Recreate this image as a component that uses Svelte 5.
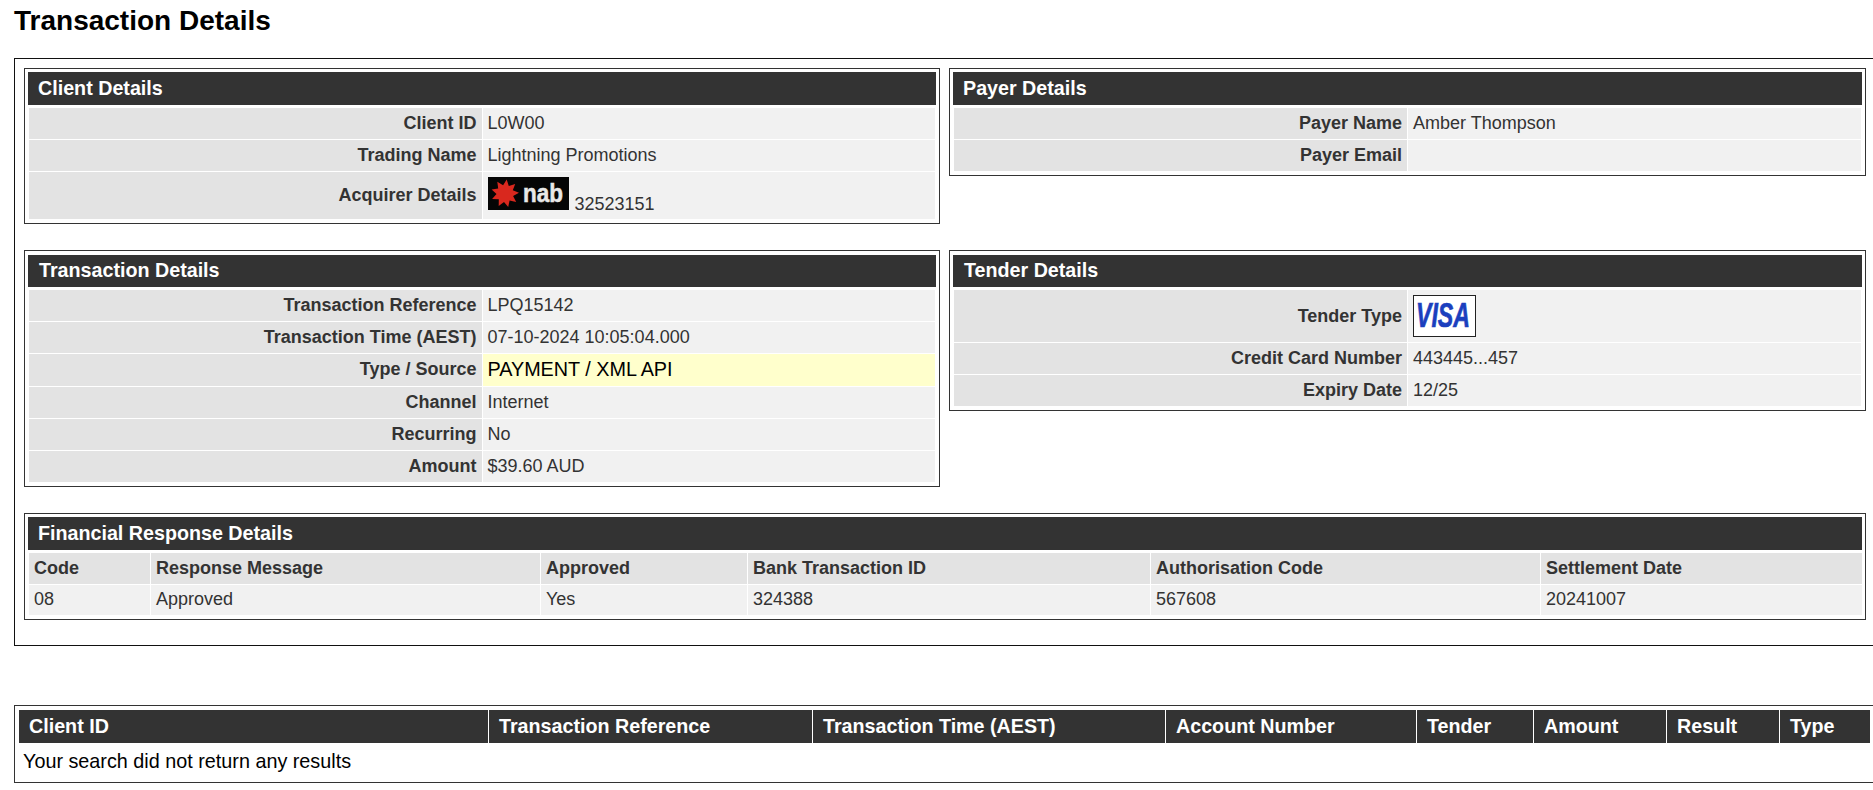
<script>
    const clientRows = [
        ['Client ID', 'L0W00'],
        ['Trading Name', 'Lightning Promotions']
    ];
    const payerRows = [
        ['Payer Name', 'Amber Thompson'],
        ['Payer Email', '']
    ];
    const transactionRows = [
        ['Transaction Reference', 'LPQ15142'],
        ['Transaction Time (AEST)', '07-10-2024 10:05:04.000'],
        ['Type / Source', 'PAYMENT / XML API', true],
        ['Channel', 'Internet'],
        ['Recurring', 'No'],
        ['Amount', '$39.60 AUD']
    ];
    const tenderRows = [
        ['Credit Card Number', '443445...457'],
        ['Expiry Date', '12/25']
    ];
    const financial = [
        ['Code', '08', 121],
        ['Response Message', 'Approved', 389],
        ['Approved', 'Yes', 206],
        ['Bank Transaction ID', '324388', 402],
        ['Authorisation Code', '567608', 389],
        ['Settlement Date', '20241007', 321]
    ];
    const searchCols = [
        ['Client ID', 470],
        ['Transaction Reference', 324],
        ['Transaction Time (AEST)', 353],
        ['Account Number', 251],
        ['Tender', 117],
        ['Amount', 133],
        ['Result', 113],
        ['Type', 91]
    ];

    // spiky star of the nab logo
    function starPoints(cx, cy, outer, inner, count) {
        const pts = [];
        for (let i = 0; i < count * 2; i++) {
            const r = i % 2 ? inner : outer;
            const a = (Math.PI * i) / count - Math.PI / 2 + 0.12;
            pts.push((cx + r * Math.cos(a)).toFixed(1) + ',' + (cy + r * Math.sin(a)).toFixed(1));
        }
        return pts.join(' ');
    }
</script>

<h1>Transaction Details</h1>

<section class="outer">
    <div class="grid">
        <div class="box">
            <h2>Client Details</h2>
            <table>
                <tbody>
                    {#each clientRows as [label, value]}
                        <tr><th>{label}</th><td>{value}</td></tr>
                    {/each}
                    <tr class="logo-row">
                        <th>Acquirer Details</th>
                        <td>
                            <svg class="nab" width="81" height="33" viewBox="0 0 81 33">
                                <rect width="81" height="33" fill="#050505" />
                                <polygon points={starPoints(17, 16.5, 14, 8.5, 9)} fill="#d9281e" />
                                <text x="35" y="25" class="nab-text" textLength="40" lengthAdjust="spacingAndGlyphs">nab</text>
                            </svg>
                            <span class="acq">32523151</span>
                        </td>
                    </tr>
                </tbody>
            </table>
        </div>

        <div class="box top">
            <h2>Payer Details</h2>
            <table>
                <tbody>
                    {#each payerRows as [label, value]}
                        <tr><th>{label}</th><td>{value}</td></tr>
                    {/each}
                </tbody>
            </table>
        </div>

        <div class="box second">
            <h2>Transaction Details</h2>
            <table>
                <tbody>
                    {#each transactionRows as [label, value, highlight]}
                        <tr class:tall={highlight}><th>{label}</th><td class:highlight>{value}</td></tr>
                    {/each}
                </tbody>
            </table>
        </div>

        <div class="box second top">
            <h2>Tender Details</h2>
            <table>
                <tbody>
                    <tr class="tender-row">
                        <th>Tender Type</th>
                        <td>
                            <svg class="visa" width="63" height="42" viewBox="0 0 63 42">
                                <rect x="0.5" y="0.5" width="62" height="41" fill="#fff" stroke="#222" />
                                <text x="3" y="32" class="visa-text" textLength="54" lengthAdjust="spacingAndGlyphs">VISA</text>
                            </svg>
                        </td>
                    </tr>
                    {#each tenderRows as [label, value]}
                        <tr><th>{label}</th><td>{value}</td></tr>
                    {/each}
                </tbody>
            </table>
        </div>
    </div>

    <div class="box financial">
        <h2>Financial Response Details</h2>
        <table>
            <colgroup>
                {#each financial as col}
                    <col style="width: {col[2]}px" />
                {/each}
            </colgroup>
            <tbody>
                <tr>
                    {#each financial as col}
                        <th>{col[0]}</th>
                    {/each}
                </tr>
                <tr class="short">
                    {#each financial as col}
                        <td>{col[1]}</td>
                    {/each}
                </tr>
            </tbody>
        </table>
    </div>
</section>

<section class="results">
    <table>
        <colgroup>
            {#each searchCols as col}
                <col style="width: {col[1]}px" />
            {/each}
        </colgroup>
        <thead>
            <tr>
                {#each searchCols as col}
                    <th>{col[0]}</th>
                {/each}
            </tr>
        </thead>
        <tbody>
            <tr><td colspan="8">Your search did not return any results</td></tr>
        </tbody>
    </table>
</section>

<style>
    :global(body) {
        background: #fff;
        color: #000;
        font-family: "Liberation Sans", Arial, sans-serif;
        overflow-x: hidden;
    }

    h1 {
        margin: 0;
        padding: 6px 0 0 14px;
        height: 58px;
        box-sizing: border-box;
        font-size: 28px;
        line-height: 30px;
    }

    .outer {
        box-sizing: border-box;
        width: 1900px;
        margin-left: 14px;
        border: 1px solid #111;
        padding: 9px 9px 25px;
    }

    .grid {
        display: grid;
        grid-template-columns: 916px 917px;
        column-gap: 9px;
        row-gap: 26px;
    }

    .box {
        box-sizing: border-box;
        border: 1px solid #333;
        padding: 3px;
    }

    .top {
        align-self: start;
    }

    .financial {
        width: 1842px;
        margin-top: 26px;
    }

    h2 {
        margin: 0 0 2px;
        height: 33px;
        padding-left: 10px;
        background: #333;
        color: #fff;
        font-size: 19.7px;
        line-height: 32px;
    }

    .second {
        padding-top: 4px;
    }

    .second h2 {
        height: 32px;
        padding-left: 11px;
        line-height: 31px;
    }

    table {
        border-collapse: separate;
        border-spacing: 1px;
        width: 100%;
        table-layout: fixed;
        font-size: 18px;
    }

    .box th,
    .box td {
        height: 31px;
        box-sizing: border-box;
        padding: 0 5px;
        background: #e3e3e3;
        color: #333;
        text-align: right;
        font-weight: bold;
    }

    .box td {
        background: #f1f1f1;
        text-align: left;
        font-weight: normal;
    }

    .box td.highlight {
        background: #ffffcc;
        color: #000;
        font-size: 19.8px;
    }

    .financial th,
    .financial td {
        text-align: left;
        padding-bottom: 1px;
    }

    .box .tall th,
    .box .tall td {
        height: 32px;
        padding-bottom: 1px;
    }

    .box .short td {
        height: 30px;
    }

    .box .logo-row th,
    .box .logo-row td {
        height: 47px;
    }

    .box .tender-row th,
    .box .tender-row td {
        height: 52px;
    }

    .nab-text {
        font-family: "Liberation Sans", Arial, sans-serif;
        font-size: 25px;
        font-weight: bold;
        fill: #e8e8e8;
        stroke: #e8e8e8;
        stroke-width: 0.5;
    }

    .acq {
        margin-left: 1px;
    }

    .visa {
        display: block;
        overflow: visible;
    }

    .visa-text {
        font-family: "Liberation Sans", Arial, sans-serif;
        font-size: 35px;
        font-weight: bold;
        font-style: italic;
        fill: #1b3fbe;
        stroke: #1b3fbe;
        stroke-width: 0.7;
    }

    .results {
        box-sizing: border-box;
        width: 1900px;
        height: 78px;
        margin: 59px 0 0 14px;
        border: 1px solid #333;
        padding: 4px 0 0 4px;
    }

    .results table {
        width: 1852px;
        border-spacing: 0;
    }

    .results th {
        height: 33px;
        box-sizing: border-box;
        padding: 0 10px 1px;
        background: #333;
        color: #fff;
        border-right: 1px solid #fff;
        font-size: 19.7px;
        text-align: left;
    }

    .results td {
        padding: 7px 4px 0;
        font-size: 19.8px;
    }
</style>
